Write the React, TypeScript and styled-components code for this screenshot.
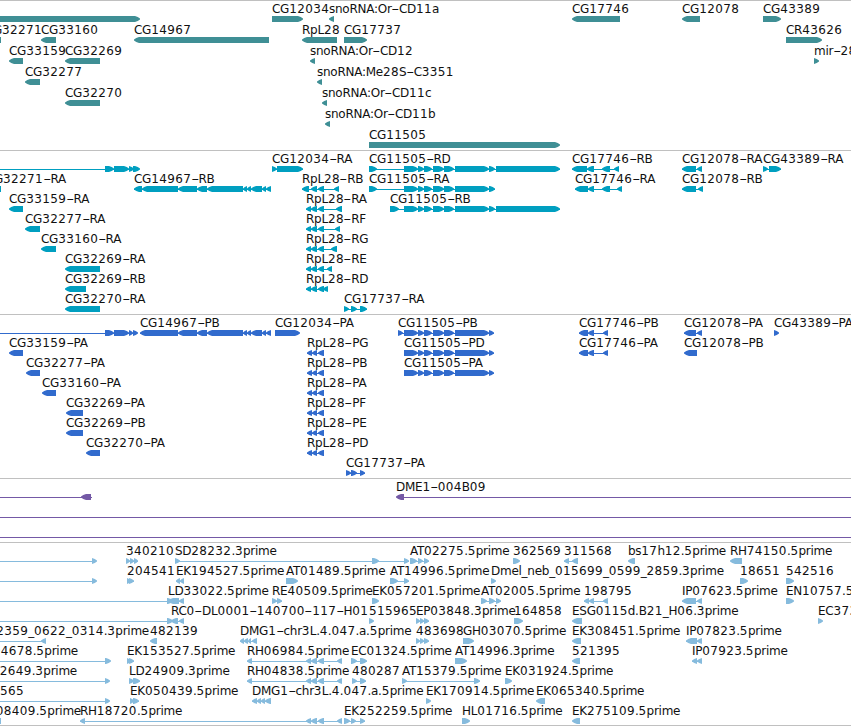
import styled, { createGlobalStyle } from "styled-components";

type Dir = "L" | "R";
type Span = [number, number];
interface Feature {
  name?: string;
  at: number;
  dir: Dir;
  spans: Span[];
  line?: Span;
  endsAt?: number;
}
interface TrackData {
  id: string;
  color: string;
  pitch: number;
  pad: number;
  lanes: Feature[][];
}

const VIEW_WIDTH = 851,
  GLYPH_HEIGHT = 6,
  TIP = 5;

const ft = (name: string, dir: Dir, ...spans: Span[]): Feature => ({
  name,
  dir,
  spans,
  at: spans[0][0],
  line: spans.length > 1 ? [spans[0][0], spans[spans.length - 1][1]] : undefined,
});
/* feature that begins left of the visible range, its label is anchored by the right side */
const cut = (name: string, endsAt: number, dir: Dir, line: Span | undefined, ...spans: Span[]): Feature => ({
  name,
  endsAt,
  dir,
  line,
  spans,
  at: 0,
});
const bare = (dir: Dir, line: Span | undefined, ...spans: Span[]): Feature => ({ at: 0, dir, line, spans });

const cg11505Cds: Span[] = [
    [404, 418],
    [418, 424],
    [424, 432],
    [433, 444],
    [444, 454],
    [455, 489],
  ],
  cg14967Tail: Span[] = [
    [178, 197],
    [197, 207],
    [207, 243],
    [243, 247],
    [247, 251],
    [251, 262],
    [262, 266],
    [266, 271],
  ],
  rpl28: Span[] = [
    [306, 311],
    [311, 317],
    [318, 324],
  ],
  rpl28Cds: Span[] = [
    [307, 312],
    [312, 317],
    [318, 324],
  ];

const tracks: TrackData[] = [
  {
    id: "genes",
    color: "#3f8f95",
    pitch: 21,
    pad: 2,
    lanes: [
      [
        bare("R", undefined, [-5, 140]),
        ft("CG12034", "R", [272, 303]),
        ft("snoRNA:Or-CD11a", "L", [329, 334]),
        ft("CG17746", "L", [572, 620]),
        ft("CG12078", "L", [682, 700]),
        ft("CG43389", "R", [763, 781]),
      ],
      [
        cut("CG32271", 42, "L", undefined, [-14, 1]),
        ft("CG33160", "L", [41, 56]),
        ft("CG14967", "L", [134, 269]),
        ft("RpL28", "L", [302, 337]),
        ft("CG17737", "R", [344, 367]),
        ft("CR43626", "R", [786, 822]),
      ],
      [
        ft("CG33159", "L", [9, 23]),
        ft("CG32269", "L", [65, 100]),
        ft("snoRNA:Or-CD12", "L", [310, 315]),
        ft("mir-282", "R", [814, 819]),
      ],
      [ft("CG32277", "L", [25, 40]), ft("snoRNA:Me28S-C3351", "L", [317, 322])],
      [ft("CG32270", "L", [65, 100]), ft("snoRNA:Or-CD11c", "L", [322, 327])],
      [ft("snoRNA:Or-CD11b", "L", [325, 330])],
      [ft("CG11505", "R", [369, 560])],
    ],
  },
  {
    id: "transcripts",
    color: "#009fc0",
    pitch: 20,
    pad: 3,
    lanes: [
      [
        bare("R", [-5, 138], [105, 114], [114, 129], [129, 134], [133, 140]),
        ft("CG12034-RA", "R", [272, 277], [277, 303]),
        ft("CG11505-RD", "R", [369, 377], ...cg11505Cds, [489, 495], [496, 560]),
        ft("CG17746-RB", "L", [572, 587], [587, 594], [602, 610], [614, 619]),
        ft("CG12078-RA", "L", [682, 696], [697, 702]),
        ft("CG43389-RA", "R", [763, 768], [769, 781]),
      ],
      [
        cut("CG32271-RA", 66, "L", undefined, [-14, 1]),
        ft("CG14967-RB", "L", [134, 142], [142, 178], ...cg14967Tail),
        ft("RpL28-RB", "L", [302, 309], [311, 317], [318, 324], [334, 339]),
        ft("CG11505-RA", "R", [369, 377], ...cg11505Cds, [489, 495]),
        ft("CG17746-RA", "L", [575, 588], [588, 594], [602, 610], [617, 622]),
        ft("CG12078-RB", "L", [682, 696], [698, 703]),
      ],
      [
        ft("CG33159-RA", "L", [9, 23]),
        ft("RpL28-RA", "L", ...rpl28, [336, 342]),
        ft("CG11505-RB", "R", [390, 399], ...cg11505Cds, [489, 495], [496, 560]),
      ],
      [ft("CG32277-RA", "L", [25, 40]), ft("RpL28-RF", "L", ...rpl28, [335, 340])],
      [ft("CG33160-RA", "L", [41, 56]), ft("RpL28-RG", "L", ...rpl28, [331, 337])],
      [ft("CG32269-RA", "L", [65, 100]), ft("RpL28-RE", "L", ...rpl28, [327, 332])],
      [ft("CG32269-RB", "L", [65, 86]), ft("RpL28-RD", "L", ...rpl28, [323, 328])],
      [ft("CG32270-RA", "L", [65, 100]), ft("CG17737-RA", "R", [344, 349], [351, 357], [360, 367])],
    ],
  },
  {
    id: "proteins",
    color: "#316bcd",
    pitch: 20,
    pad: 3,
    lanes: [
      [
        bare("R", [-5, 136], [105, 114], [114, 129], [129, 133], [133, 138]),
        ft("CG14967-PB", "L", [140, 178], ...cg14967Tail),
        ft("CG12034-PA", "R", [275, 300]),
        ft("CG11505-PB", "R", [398, 403], ...cg11505Cds, [489, 494]),
        ft("CG17746-PB", "L", [579, 588], [588, 594], [603, 608]),
        ft("CG12078-PA", "L", [684, 696], [697, 702]),
        ft("CG43389-PA", "R", [774, 779]),
      ],
      [
        ft("CG33159-PA", "L", [9, 23]),
        ft("RpL28-PG", "L", ...rpl28Cds),
        ft("CG11505-PD", "R", ...cg11505Cds, [489, 494]),
        ft("CG17746-PA", "L", [579, 588], [588, 594], [603, 608]),
        ft("CG12078-PB", "L", [684, 697]),
      ],
      [
        ft("CG32277-PA", "L", [26, 40]),
        ft("RpL28-PB", "L", ...rpl28Cds),
        ft("CG11505-PA", "R", ...cg11505Cds, [489, 494]),
      ],
      [ft("CG33160-PA", "L", [42, 56]), ft("RpL28-PA", "L", ...rpl28Cds)],
      [ft("CG32269-PA", "L", [66, 83]), ft("RpL28-PF", "L", ...rpl28Cds)],
      [ft("CG32269-PB", "L", [66, 83]), ft("RpL28-PE", "L", ...rpl28Cds)],
      [ft("CG32270-PA", "L", [86, 100]), ft("RpL28-PD", "L", ...rpl28Cds)],
      [ft("CG17737-PA", "R", [346, 351], [351, 357], [360, 365])],
    ],
  },
  {
    id: "bacs",
    color: "#7459a6",
    pitch: 20,
    pad: 3,
    lanes: [
      [bare("L", [-5, 92], [81, 91]), { name: "DME1-004B09", at: 396, dir: "L", spans: [[396, 404]], line: [400, 856] }],
      [bare("L", [-5, 856])],
      [bare("L", [-5, 856])],
    ],
  },
  {
    id: "ests",
    color: "#86bbdd",
    pitch: 20,
    pad: 2,
    lanes: [
      [
        bare("R", [-5, 95], [92, 97]),
        ft("340210", "R", [126, 130], [130, 134], [134, 138]),
        ft("SD28232.3prime", "R", [175, 180], [372, 379], [404, 409]),
        ft("AT02275.5prime", "R", [410, 417], [418, 423], [424, 429]),
        ft("362569", "R", [513, 520]),
        ft("311568", "L", [564, 569], [572, 578]),
        ft("bs17h12.5prime", "L", [628, 635]),
        ft("RH74150.5prime", "L", [730, 742]),
      ],
      [
        bare("R", [-5, 95], [92, 97]),
        ft("204541", "R", [127, 131], [129, 134]),
        ft("EK194527.5prime", "L", [176, 180], [180, 184]),
        ft("AT01489.5prime", "R", [286, 298]),
        ft("AT14996.5prime", "R", [390, 398], [404, 409]),
        ft("Dmel_neb_015699_0599_2859.3prime", "R", [491, 496]),
        ft("18651", "R", [740, 748]),
        ft("542516", "R", [786, 794]),
      ],
      [
        bare("R", [-5, 172], [167, 173]),
        ft("LD33022.5prime", "L", [168, 179], [179, 184]),
        ft("RE40509.5prime", "R", [272, 277], [277, 282]),
        ft("EK057201.5prime", "R", [372, 379]),
        ft("AT02005.5prime", "R", [481, 487], [489, 495], [496, 501]),
        ft("198795", "L", [584, 589], [589, 594], [603, 608]),
        ft("IP07623.5prime", "L", [682, 696], [697, 702]),
        ft("EN10757.5prime", "R", [786, 794]),
      ],
      [
        bare("R", [-5, 172], [167, 173]),
        ft("RC0-DL0001-140700-117-H01", "L", [171, 178], [179, 184]),
        ft("515965", "R", [369, 374]),
        ft("EP03848.3prime", "R", [416, 420], [420, 424], [424, 429]),
        ft("164858", "R", [514, 523]),
        ft("ESG0115d.B21_H06.3prime", "L", [572, 582]),
        ft("EC373448.5prime", "R", [818, 823]),
      ],
      [
        cut("Dmel_neb_012359_0622_0314.3prime", 149, "L", [-5, 43], [41, 46]),
        ft("482139", "L", [150, 157]),
        ft("DMG1-chr3L.4.047.a.5prime", "L", [240, 244], [244, 248], [248, 251], [252, 257]),
        ft("483698", "R", [416, 420], [420, 424], [424, 429]),
        ft("GH03070.5prime", "R", [463, 474]),
        ft("EK308451.5prime", "L", [572, 581]),
        ft("IP07823.5prime", "L", [686, 697], [697, 702]),
      ],
      [
        cut("AT04678.5prime", 78, "R", [-5, 108], [105, 111]),
        ft("EK153527.5prime", "R", [127, 131], [129, 134]),
        ft("RH06984.5prime", "L", [247, 252], ...rpl28, [337, 342]),
        ft("EC01324.5prime", "R", [351, 357], [360, 367]),
        ft("AT14996.3prime", "R", [455, 467]),
        ft("521395", "L", [572, 580]),
        ft("IP07923.5prime", "L", [692, 697], [697, 702]),
      ],
      [
        cut("LD12649.3prime", 77, "R", [-5, 108], [105, 110]),
        ft("LD24909.3prime", "R", [129, 134], [133, 140]),
        ft("RH04838.5prime", "L", [247, 252], ...rpl28, [337, 342]),
        ft("480287", "R", [352, 357], [360, 366]),
        ft("AT15379.5prime", "R", [402, 407], [474, 480]),
        ft("EK031924.5prime", "R", [505, 512]),
      ],
      [
        cut("480565", 24, "R", [-5, 108], [105, 110]),
        ft("EK050439.5prime", "R", [130, 134], [133, 139]),
        ft("DMG1-chr3L.4.047.a.5prime", "L", [252, 257], [257, 261], [261, 265], [265, 271]),
        ft("EK170914.5prime", "R", [426, 431]),
        ft("EK065340.5prime", "L", [536, 545]),
      ],
      [
        cut("AT08409.5prime", 81, "L", undefined, [-5, 1]),
        ft("RH18720.5prime", "L", [80, 85], ...rpl28, [337, 342]),
        ft("EK252259.5prime", "R", [344, 350], [351, 356], [360, 365]),
        ft("HL01716.5prime", "R", [462, 470]),
        ft("EK275109.5prime", "L", [572, 580]),
      ],
    ],
  },
];

const GlobalStyle = createGlobalStyle`
  body {
    margin: 0;
    background: #fff;
  }
`;
const Browser = styled.main`
  display: flex;
  flex-direction: column;
  width: ${VIEW_WIDTH}px;
  height: 726px;
  overflow: hidden;
  background: #fff;
  box-sizing: border-box;
  border-bottom: 1px solid #c0c0c0;
`;
const Track = styled.section<{ $color: string; $pad: number }>`
  display: flex;
  flex-direction: column;
  flex: none;
  padding-bottom: ${p => p.$pad}px;
  border-top: 1px solid #c0c0c0;
  color: ${p => p.$color};
`;
const Lane = styled.div<{ $pitch: number }>`
  position: relative;
  display: flex;
  flex-direction: column;
  box-sizing: border-box;
  height: ${p => p.$pitch}px;
  padding-top: 15px;
`;
const Label = styled.span`
  position: absolute;
  top: 1px;
  color: #111;
  font: 12px/15px "DejaVu Sans", sans-serif;
  letter-spacing: -0.26px;
  white-space: pre;
`;
const Digits = styled.span`
  letter-spacing: 0.37px;
`;
const Dash = styled.span`
  display: inline-block;
  margin: 0 1.5px;
  letter-spacing: 0;
  transform: scaleX(1.85);
`;
const Glyphs = styled.svg`
  display: block;
  flex: none;
  width: ${VIEW_WIDTH}px;
  height: ${GLYPH_HEIGHT}px;
  fill: currentColor;
`;

/* slightly convex head, so that short exons stay readable at this height */
function arrow([a, b]: Span, dir: Dir): string {
  const tip = Math.min(TIP, b - a),
    h = GLYPH_HEIGHT,
    [tail, head, sign] = dir === "R" ? [a, b, 1] : [b, a, -1],
    neck = head - sign * tip,
    bend = head - sign * tip * 0.45;
  return [
    [tail, 0],
    [neck, 0],
    [bend, 1],
    [head, 2.5],
    [head, 3.5],
    [bend, 5],
    [neck, h],
    [tail, h],
  ]
    .map(p => p.join(","))
    .join(" ");
}

function FeatureName({ name }: { name: string }) {
  return (
    <>
      {name
        .split(/(\d+|-)/)
        .filter(Boolean)
        .map((part, i) => {
          if (part === "-") return <Dash key={i}>{part}</Dash>;
          return /\d/.test(part) ? <Digits key={i}>{part}</Digits> : part;
        })}
    </>
  );
}

function FeatureLane({ features, pitch }: { features: Feature[]; pitch: number }) {
  return (
    <Lane $pitch={pitch}>
      {features.map(
        (f, i) =>
          f.name && (
            <Label
              key={`label__${i}`}
              style={f.endsAt === undefined ? { left: f.at } : { right: VIEW_WIDTH - f.endsAt }}>
              <FeatureName name={f.name} />
            </Label>
          )
      )}
      <Glyphs viewBox={`0 0 ${VIEW_WIDTH} ${GLYPH_HEIGHT}`} aria-hidden='true'>
        {features.map((f, i) => (
          <g key={`glyph__${i}`}>
            {f.line && <rect x={f.line[0]} y='3' width={f.line[1] - f.line[0]} height='1' />}
            {f.spans.map((s, j) => (
              <polygon key={`span__${j}`} points={arrow(s, f.dir)} />
            ))}
          </g>
        ))}
      </Glyphs>
    </Lane>
  );
}

export default function App() {
  return (
    <>
      <GlobalStyle />
      <Browser>
        {tracks.map(t => (
          <Track key={t.id} $color={t.color} $pad={t.pad}>
            {t.lanes.map((features, i) => (
              <FeatureLane key={`${t.id}__${i}`} features={features} pitch={t.pitch} />
            ))}
          </Track>
        ))}
      </Browser>
    </>
  );
}
